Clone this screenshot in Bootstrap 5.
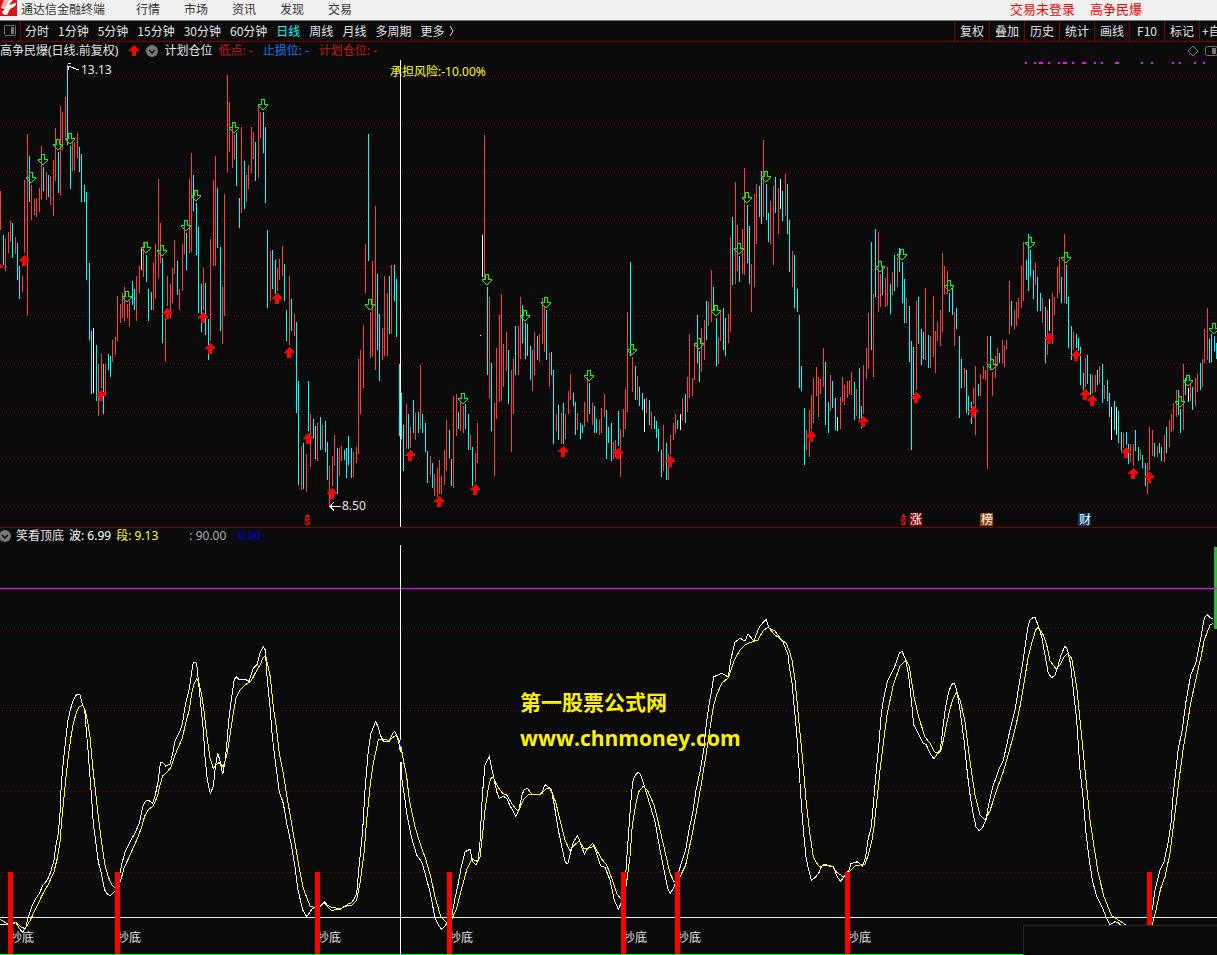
<!DOCTYPE html>
<html lang="zh-CN">
<head>
<meta charset="utf-8">
<meta name="viewport" content="width=device-width, initial-scale=1">
<title>通达信金融终端</title>
<link href="https://cdn.jsdelivr.net/npm/bootstrap@5.3.0/dist/css/bootstrap.min.css" rel="stylesheet">
<style>
  body { background: #0a0a0a; color: #e6e6e6; font-family: "Noto Sans CJK SC", "Noto Sans", sans-serif; font-size: 12px; line-height: 18px; }
  button { background: none; border: 0; padding: 0; color: inherit; white-space: nowrap; }
  .titlebar { height: 21px; background: #f0f0f0; color: #333; border-bottom: 1px solid #70757a; line-height: 17px; }
  .menus { gap: 24px; margin-left: 31px; }
  .account { color: #f00; font-size: 13px; gap: 15px; margin-right: 75px; }
  .toolbar { height: 21px; border-bottom: 1px solid #800000; }
  .toggle-cell { width: 21px; border-right: 1px solid #800000; }
  .periods { gap: 9px; padding-left: 4px; }
  .periods .active { color: #0ff; }
  .tools button { width: 35px; border-left: 1px solid #800000; }
  .tools .tool-last { width: 18px; overflow: hidden; padding-left: 2px; }
  .info-main, .info-sub, .chart .num { font-family: "Noto Sans", "Noto Sans CJK SC", sans-serif; }
  .info-main { height: 18px; gap: 6px; }
  .info-sub { height: 18px; border-top: 1px solid #800000; gap: 5px; line-height: 15px; padding-bottom: 2px; }
  .c-red { color: #d01010; } .c-blue { color: #0080ff; } .c-yellow { color: #ff0; }
  .c-gray { color: #b0b0b0; margin-left: 26px; } .c-navy { color: #0000e0; }
  .chart { shape-rendering: crispEdges; fill: none; }
  .chart text { fill: #e6e6e6; font-size: 12px; }
  .chart .risk { fill: #ff0; }
  .chart .tag { fill: #fff; }
  .chart .warn { fill: #f00; font: bold 10px "Liberation Mono", monospace; }
  .chart .mark-cn, .chart .mark-url { fill: #fff200; font-size: 21px; font-weight: 700; }
  .chart .mark-url { font-family: "Open Sans", "Noto Sans", sans-serif; }
  .gridline { stroke: #900000; stroke-dasharray: 1 3; }
</style>
</head>
<body class="d-flex flex-column min-vh-100 overflow-x-hidden">

<header class="titlebar d-flex flex-nowrap align-items-start overflow-hidden">
  <svg class="flex-shrink-0" width="17" height="16" viewBox="0 0 17 16" aria-hidden="true">
    <path fill="#d81418" d="M0 0h17v16H0z"/>
    <path fill="#fff" d="M4 0h9L9 5l7-2c0 3-2 4-6 6l-3 6c-3 0-5-1-5-3l3-3-4-1z"/>
    <path fill="#f8b0a8" d="M4 0 1 8l5-1 3-7z"/>
  </svg>
  <span class="text-nowrap ms-1">通达信金融终端</span>
  <nav class="menus d-flex" aria-label="主菜单">
    <button type="button">行情</button><button type="button">市场</button><button type="button">资讯</button><button type="button">发现</button><button type="button">交易</button>
  </nav>
  <div class="account d-flex ms-auto text-nowrap"><span>交易未登录</span><span>高争民爆</span></div>
</header>

<div class="toolbar d-flex flex-nowrap overflow-hidden">
  <button type="button" class="toggle-cell d-flex align-items-center flex-shrink-0" aria-label="侧栏">
    <svg class="mx-auto" width="14" height="12" viewBox="0 0 14 12" fill="none"><rect x="1.5" y=".5" width="11" height="10" rx="1" stroke="#777"/><path fill="#777" d="M8 2h3v7H8z"/></svg>
  </button>
  <nav class="periods d-flex align-items-center" aria-label="周期">
    <button type="button">分时</button><button type="button">1分钟</button><button type="button">5分钟</button><button type="button">15分钟</button><button type="button">30分钟</button><button type="button">60分钟</button><button type="button" class="active" aria-current="true">日线</button><button type="button">周线</button><button type="button">月线</button><button type="button">多周期</button>
    <button type="button" class="d-flex align-items-center">更多<svg class="ms-1" width="8" height="12" viewBox="0 0 8 12" fill="none" stroke="#ddd"><path d="M2 1l3 5-3 5"/></svg></button>
  </nav>
  <div class="tools d-flex ms-auto flex-shrink-0">
    <button type="button">复权</button><button type="button">叠加</button><button type="button">历史</button><button type="button">统计</button><button type="button">画线</button><button type="button">F10</button><button type="button">标记</button><button type="button" class="tool-last text-start">+自</button>
  </div>
</div>

<main>
  <section aria-label="K线图">
    <div class="info-main d-flex flex-nowrap align-items-center text-nowrap overflow-hidden">
      <span>高争民爆(日线.前复权)</span>
      <svg class="ms-1 flex-shrink-0" width="12" height="12" viewBox="0 0 12 12"><path fill="#f00" d="M6 0l6 6H8v5H4V6H0z"/></svg>
      <svg class="flex-shrink-0" width="12" height="12" viewBox="2 0 12 12"><circle cx="8" cy="6" r="6" fill="#777"/><path d="M5 5l3 3 3-3" fill="none" stroke="#0a0a0a" stroke-width="1.5"/></svg>
      <span>计划仓位</span>
      <span class="c-red">低点: -</span>
      <span class="c-blue ms-1">止损位: -</span>
      <span class="c-red ms-1">计划仓位: -</span>
      <svg class="ms-auto flex-shrink-0" width="30" height="12" viewBox="0 0 30 12" fill="none" stroke="#777"><path d="M6 1l5 5-5 5-5-5z"/><rect x="18.5" y="1.5" width="12" height="9" rx="2"/><path fill="#777" stroke="none" d="M25 3h4v6h-4z"/></svg>
    </div>
    <svg class="chart d-block w-100" viewBox="0 60 1217 467" id="kline" role="img" aria-label="日线走势">
      <g id="kgrid"></g>
      <path id="dots" stroke="#f0f" stroke-width="2"/>
      <g transform="translate(.5 0)">
        <path id="up" stroke="#ff3c3c"/><path id="down" stroke="#0ff"/><path id="flat" stroke="#fff"/>
      </g>
      <path fill="#fff" d="M480 335h1v1h-1z"/>
      <g id="signals"></g>
      <path stroke="#fff" d="M68 70v-4l11 4M68 63.5h3M330 506.5h11M334 502l-4 4.5 4 4"/>
      <text class="num" x="81" y="74">13.13</text>
      <text class="num" x="342" y="510">8.50</text>
      <text class="risk num" x="390" y="76">承担风险:-10.00%</text>
      <path fill="#800000" d="M909 513h12l1 1v12h-13z"/><path fill="#8a4500" d="M980 513h12l1 1v12h-13z"/><path fill="#003468" d="M1078 513h12l1 1v12h-13z"/>
      <text class="tag" x="910" y="524">涨</text><text class="tag" x="981" y="524">榜</text><text class="tag" x="1079" y="524">财</text>
      <text class="warn" x="304" y="525">S</text><text class="warn" x="900" y="525">S</text>
      <path fill="#f00" d="M304 517l3-3 3 3zM900 517l3-3 3 3z"/>
      <path stroke="#fff" d="M400.5 60v467"/>
    </svg>
  </section>

  <section aria-label="笑看顶底">
    <div class="info-sub d-flex flex-nowrap align-items-center text-nowrap overflow-hidden">
      <svg class="flex-shrink-0" width="11" height="12" viewBox="1 0 11 12"><circle cx="6" cy="6" r="6" fill="#777"/><path d="M3 5l3 3 3-3" fill="none" stroke="#0a0a0a" stroke-width="1.5"/></svg>
      <span>笑看顶底</span><span class="text-white">波: 6.99</span><span class="c-yellow">段: 9.13</span>
      <span class="c-gray">: 90.00</span><span class="c-navy">: 0.00</span>
    </div>
    <svg class="chart d-block w-100" viewBox="0 545 1217 410" id="wave" role="img" aria-label="波段指标">
      <g id="wgrid"></g>
      <path stroke="#f0f" d="M0 588.5h1217"/>
      <path stroke="#f0f0e8" d="M0 917.5h1217"/>
      <path id="white" stroke="#fff"/>
      <path id="yellow" stroke="#ff0"/>
      <g id="bottoms"></g>
      <path fill="#32b43c" d="M1214 547h3v82h-3z"/>
      <path stroke="#f0f" d="M1214 588.5h3"/>
      <path stroke="#0f0" d="M0 954.5h1024"/>
      <path fill="#0a0a0a" stroke="#2a2a2a" d="M1023 955v-29.5h195v30"/>
      <path stroke="#fff" d="M400.5 545v195M400.5 762v193"/>
      <path stroke="#00f" d="M400.5 741v5"/><path stroke="#fff" d="M400.5 746v6"/>
      <text class="mark-cn" x="520" y="710">第一股票公式网</text>
      <text class="mark-url" x="520" y="746">www.chnmoney.com</text>
    </svg>
  </section>
</main>

<script src="https://cdn.jsdelivr.net/npm/bootstrap@5.3.0/dist/js/bootstrap.bundle.min.js"></script>
<script>
// Daily bars: direction, x, high, low
const bars = `R0 191 230,C3 235 265,R5 239 271,R8 232 253,R10 221 242,C12 223 258,R15 237 254,C17 243 280,C19 266 299,R22 276 292,R24 180 253,R27 134 315,C29 156 202,R31 185 220,R34 199 215,R36 198 217,R39 188 212,R41 146 199,C43 167 191,R46 172 200,C48 175 197,R50 176 205,R53 160 216,R55 128 181,C58 152 193,R60 106 196,R62 112 150,R65 97 137,C67 65 145,C70 146 189,R72 142 171,R74 142 170,R77 133 158,C79 147 172,C81 154 202,C84 185 202,C86 192 280,C89 263 340,C91 331 394,W93 328 393,C96 345 401,R98 364 416,R101 354 388,C103 364 414,R105 364 394,C108 354 370,C110 356 377,R112 340 362,R115 337 355,R117 296 341,R120 304 323,R122 293 318,R124 287 321,R127 304 318,R129 301 326,C132 281 305,C134 289 310,R136 276 321,R139 266 293,W141 249 270,R143 242 277,C146 255 282,C148 289 321,C151 292 310,R153 263 310,R155 244 299,R158 179 278,R160 223 263,C162 258 343,R165 313 362,R167 276 306,R170 284 318,R172 268 303,R174 240 274,C177 261 295,R179 289 310,R182 244 291,R184 220 254,C186 233 270,R189 179 253,R191 153 252,C193 175 211,C196 203 255,C198 227 313,C201 284 332,R203 268 310,C205 283 335,C208 319 360,R210 239 341,R213 180 266,R215 156 266,C217 188 248,C220 247 331,R222 287 344,R224 194 316,R227 75 172,R229 102 152,R232 126 168,R234 135 159,C236 133 186,C239 198 228,R241 127 213,C244 161 209,R246 175 202,R248 165 189,R251 127 173,R253 132 159,C255 142 181,R258 106 178,R260 112 138,C263 112 153,C265 127 203,C267 230 308,R270 251 301,C272 250 289,C275 260 294,R277 268 291,R279 259 280,R282 246 276,C284 264 301,C286 310 341,R289 276 345,C291 299 331,R294 314 336,C296 322 413,C298 381 485,R301 446 490,C303 443 489,R306 454 492,C308 381 431,R310 414 467,C313 419 438,C315 426 459,R317 423 461,C320 417 450,R322 425 449,C325 421 452,C327 442 480,R329 466 506,R332 456 486,R334 435 465,C337 448 494,R339 448 476,R341 446 461,C344 450 460,C346 448 478,C348 436 465,C351 448 478,R353 452 477,R356 447 463,R358 359 454,R360 350 414,R363 325 388,R365 244 293,C368 134 261,R370 312 358,R372 261 356,R375 206 370,C377 274 350,C379 314 381,R382 328 360,R384 276 356,R387 293 356,C389 276 334,R391 265 334,C394 265 301,C396 279 337,C399 364 436,C401 393 439,C403 425 471,R406 404 449,C408 414 449,R410 427 448,C413 400 433,R415 413 440,C418 412 433,R420 365 429,C422 414 433,C425 423 452,C427 451 483,R430 456 475,C432 463 488,R434 474 496,R437 468 497,R439 460 494,R441 476 494,R444 450 485,R446 420 470,C449 430 458,C451 459 486,R453 396 488,R456 394 436,C458 412 429,R460 401 431,R463 406 433,C465 404 429,C468 414 450,R470 435 450,C472 447 486,R475 453 482,R477 423 463,W482 235 277,R484 135 279,C487 287 375,R489 297 398,C491 363 431,R494 403 476,R496 348 419,R499 315 402,R501 294 401,R503 344 387,R506 332 371,C508 350 404,R511 370 452,R513 359 414,C515 326 375,R518 326 375,R520 297 359,C522 305 343,C525 323 359,C527 324 356,C530 346 380,R532 350 391,R534 332 375,C537 336 360,R539 334 362,R542 298 344,R544 306 352,C546 310 360,R549 353 387,C551 352 375,C553 370 444,R556 414 431,C558 405 440,R561 413 444,C563 403 444,R565 414 439,R568 391 414,R570 374 400,C573 393 406,C575 402 435,R577 413 430,C580 423 439,C582 425 433,R584 402 427,R587 377 422,C589 383 414,R592 403 425,C594 406 433,C596 419 433,R599 420 435,R601 408 433,R604 394 417,C606 410 459,C608 427 443,C611 423 461,R613 442 459,R615 440 457,C618 411 446,R620 429 477,R623 409 437,R625 389 429,R627 312 412,C630 262 356,R632 357 392,C635 366 400,R637 376 400,C639 387 406,C642 393 410,W644 399 432,R646 398 413,C649 400 425,R651 412 429,C654 417 429,C656 421 438,C658 429 451,C661 450 477,R663 425 471,C666 443 480,R668 454 480,R670 435 454,R673 423 440,R675 414 433,C677 420 429,W680 414 430,R682 399 420,C685 394 423,R687 377 412,R689 334 398,R692 378 396,R694 345 380,C697 315 363,C699 351 382,R701 328 372,R704 320 360,C706 301 340,R708 302 326,R711 270 322,C713 287 310,C716 318 366,R718 338 364,R720 310 341,C723 308 350,C725 318 356,R728 314 343,R730 237 332,C732 217 285,R735 182 284,R737 225 271,C739 256 282,R742 229 274,R744 168 275,C747 205 263,C749 226 284,R751 264 312,R754 194 287,R756 184 244,C759 186 217,C761 171 224,R763 140 217,C766 184 220,C768 213 242,R770 201 244,R773 186 265,C775 177 213,R778 188 234,W780 179 209,C782 191 221,R785 174 216,C787 184 234,C789 220 272,R792 251 287,C794 255 308,C797 289 312,C799 315 388,C801 366 391,C804 408 465,R806 430 450,R809 410 457,R811 395 429,R813 378 423,R816 367 396,R818 377 417,R820 379 394,R823 348 387,C825 362 425,C828 402 433,R830 375 411,C832 381 408,C835 398 430,W837 417 431,R840 397 429,R842 377 402,R844 385 405,R847 381 398,R849 381 394,R851 372 395,C854 382 420,R856 389 416,C859 368 419,C861 406 428,R863 365 414,R866 348 379,R868 313 369,C871 242 350,R873 294 377,C875 229 297,R878 232 312,R880 274 307,C882 267 295,R885 278 307,R887 267 306,C890 284 314,R892 272 295,C894 255 291,R897 257 287,C899 248 272,C902 262 303,C904 279 323,R906 298 323,C909 306 362,C911 341 450,C913 347 399,R916 301 390,C918 297 344,C921 329 365,C923 332 359,R925 288 360,C928 335 368,R930 336 368,R933 296 357,R935 331 373,R937 322 341,R940 310 346,R942 253 332,R944 266 294,R947 271 294,C949 293 312,C952 288 315,R954 312 346,C956 308 329,C959 336 418,C961 359 388,R964 368 387,C966 370 413,C968 396 415,C971 402 424,R973 388 404,R975 366 435,C978 384 396,R980 374 396,R983 366 379,R985 370 380,R987 336 469,C990 336 370,R992 372 396,R995 356 378,R997 348 366,C999 353 363,R1002 340 363,R1004 346 367,R1006 340 349,R1009 281 334,C1011 301 326,R1014 310 329,R1016 302 326,R1018 298 318,R1021 266 308,R1023 242 301,C1026 260 280,C1028 234 291,C1030 250 276,C1033 270 299,R1035 263 285,C1037 277 311,C1040 293 311,R1042 298 323,C1045 307 363,R1047 310 355,W1049 299 331,R1052 293 344,R1054 297 315,R1057 267 298,R1059 257 293,C1061 277 303,R1064 234 303,C1066 265 304,C1068 297 348,C1071 326 360,R1073 332 350,C1076 334 348,C1078 338 351,C1080 347 385,C1083 373 390,R1085 358 387,C1087 355 384,C1090 374 395,R1092 375 393,R1095 375 392,C1097 370 385,R1099 366 383,C1102 364 403,R1104 385 399,C1107 380 401,C1109 393 417,W1111 407 440,C1114 401 430,W1116 407 435,C1118 411 443,C1121 432 451,R1123 433 448,C1126 432 445,C1128 444 464,R1130 444 462,R1133 444 466,C1135 430 451,C1138 447 461,R1140 450 460,C1142 455 468,C1145 463 486,R1147 463 494,R1149 427 470,R1152 430 456,C1154 443 457,R1157 446 457,C1159 443 453,C1161 447 461,R1164 435 462,C1166 427 453,R1169 420 447,R1171 414 432,R1173 403 430,R1176 390 417,C1178 390 415,C1180 409 433,R1183 364 430,C1185 378 395,W1188 388 402,R1190 384 401,C1192 387 410,R1195 378 406,R1197 374 392,C1200 363 390,R1202 359 387,R1204 329 363,R1207 308 360,C1209 339 363,C1211 334 362,C1214 336 351,C1216 343 359`.split(',');
const byId = id => document.getElementById(id);
const paths = { R: '', C: '', W: '' };
for (const bar of bars) {
  const [x, high, low] = bar.slice(1).split(' ');
  paths[bar[0]] += `M${x} ${high}V${low}`;
}
byId('up').setAttribute('d', paths.R);
byId('down').setAttribute('d', paths.C);
byId('flat').setAttribute('d', paths.W);

const gridRows = rows => rows.map(y => `<path class="gridline" d="M2 ${y}.5H1217"/>`).join('');
byId('kgrid').innerHTML = gridRows([76, 124, 172, 220, 267, 315, 363, 411, 458, 506]);
byId('wgrid').innerHTML = gridRows([628, 710, 791, 872]);
byId('dots').setAttribute('d', [[1025,2],[1034,2],[1039,4],[1048,2],[1058,2],[1063,4],[1072,2],[1082,4],[1094,2],[1101,2],[1115,4],[1141,2],[1151,2],[1172,2],[1179,2],[1194,2],[1203,2]].map(([x, w]) => `M${x} 63h${w}`).join(''));

// Sell and buy signals: arrow centre and top
const sells = [[31,172],[43,154],[58,139],[70,133],[234,122],[263,99],[196,190],[186,220],[146,242],[162,245],[127,291],[370,299],[487,274],[463,393],[525,310],[546,297],[589,370],[632,344],[699,338],[716,305],[739,243],[747,192],[766,171],[880,261],[902,249],[949,280],[992,359],[1030,237],[1066,252],[1180,396],[1188,375],[1214,323]];
const buys = [[-2,262],[24,255],[101,390],[167,308],[203,312],[210,343],[277,293],[289,347],[308,433],[332,488],[410,450],[439,496],[475,484],[563,446],[618,448],[670,456],[811,431],[863,416],[916,392],[973,406],[1049,333],[1076,350],[1085,389],[1092,395],[1126,447],[1133,468],[1149,472]];
byId('signals').innerHTML =
  `<path fill="#f00" d="${buys.map(([x, y]) => `M${x} ${y}l5 5v1h-3v5h-4v-5h-3v-1z`).join('')}"/>` +
  `<path stroke="#0f0" d="${sells.map(([x, y]) => `M${x - 1.5} ${y + .5}h3v5h3v1l-4 4h-1l-4-4v-1h3z`).join('')}"/>`;

// Indicator curves, in thirds of a unit; "|" starts a new run
const curve = s => s.split('|').map(run => 'M' + run.trim().split(/\s+/).map(p => {
  const [x, y] = p.split(',');
  return `${(x / 3).toFixed(1)} ${(540 + y / 3).toFixed(1)}`;
}).join('L')).join('');
const shift = (s, dx, dy) => s.replace(/(\d+),(\d+)/g, (m, x, y) => `${+x + dx},${+y + dy}`);
byId('white').setAttribute('d', curve(
  '0,1153 24,1153 48,1148 60,1168 68,1177 78,1160 85,1130 95,1100 108,1075 118,1060 128,1037 143,1018 153,993 162,960 168,915 175,880 180,820 184,730 190,665 196,610 203,545 211,510 218,485 226,468 234,462 240,464 246,490 254,510 258,560 264,630 269,700 274,760 280,850 287,905 295,965 304,1000 314,1050 322,1062 331,1068 345,1053 360,1000 366,970 375,937 390,905 405,880 418,850 428,800 436,784 444,780 458,790 466,765 474,725 481,670 486,666 497,678 510,673 518,640 525,603 540,572 547,553 555,500 568,445 580,366 590,370 595,420 603,500 610,570 615,650 622,720 631,760 640,740 646,680 653,640 660,662 668,703 674,670 680,620 686,540 694,480 703,418 709,410 718,420 735,418 747,424 760,384 772,373 780,338 790,320 796,330 802,420 810,500 817,590 828,680 838,755 850,790 860,850 873,910 884,975 894,1050 908,1110 920,1130 938,1105 962,1096 975,1085 985,1103 995,1111 1020,1108 1045,1092 1055,1088 1070,1062 1076,990 1088,870 1095,750 1105,630 1113,580 1127,545 1134,560 1141,585 1150,603 1168,604 1178,580 1184,575 1192,590 1198,615 1201,635 | ' +
  shift('3,305 3,340 12,400 22,470 35,535 50,585 65,605 78,650 92,705 104,770 115,795 125,808 137,795 155,770 165,715 175,670 184,620 195,575 210,568 218,605 228,615 235,600 240,545 245,440 250,370 255,315 268,290 275,325 283,360 290,395 298,415 310,409 320,415 330,437 347,468 356,452 366,405 372,390 382,385 395,402 412,405 425,400 435,374 448,383 455,395 463,435 475,510 485,560 496,606 503,612 510,585 520,545 533,527 543,555 553,582 563,565 578,550 588,575 602,618 615,622 630,660 643,720 655,748 663,730 678,630 685,530 692,430 698,365 705,347 714,337 722,345 735,385 750,435 765,485 780,570 792,630 803,685 811,700 823,680 838,630 845,605 857,570 868,505 878,460 887,395 900,335 912,265 918,200 928,130 935,90 941,50 952,46 964,40 975,45 985,52 992,0 ', 1200, 360) +
  '2205,306 2214,300 2220,294 2226,298 2235,303 2244,282 2252,292 2262,303 2270,280 2280,258 2298,238 2307,264 2325,273 2349,306 2364,345 2368,380 2376,430 2390,580 ' +
  shift('0,730 6,820 12,890 18,950 25,985 34,1021 45,1013 56,1000 64,980 72,973 100,980 110,1007 121,1024 135,1008 147,990 153,970 165,968 172,965 187,978 196,955 205,895 214,860 222,770 230,680 238,600 243,530 250,480 262,425 275,398 288,370 298,338 307,335 317,360 325,400 333,470 341,555 355,580 370,610 378,613 390,640 402,656 413,640 421,630 428,570 436,505 446,455 455,433 463,430 470,450 480,510 492,600 500,680 508,750 520,825 528,860 538,872 548,862 558,840 565,800 577,745 596,690 610,660 620,615 630,570 645,510 658,430 668,370 675,320 685,255 690,240 700,232 706,233 715,258 725,290 735,345 745,400 755,413 765,405 775,375 783,345 795,318 803,330 812,375 820,450 830,540 840,690 850,780 858,880 868,960 877,1020 890,1070 905,1098 920,1135 930,1154 945,1145 955,1148 965,1158 | 1057,1110 1065,1050 1080,990 1092,965 1105,905 1113,850 1120,760 1135,625 1147,570 1157,490 1172,405 1187,370 1202,295 1213,235 1221,224 1230,232 1240,238', 2400, 0)));
byId('yellow').setAttribute('d', curve(
  '0,1138 20,1150 48,1148 62,1160 75,1166 90,1142 110,1100 128,1062 145,1033 162,995 172,955 180,905 186,830 192,770 198,710 205,650 212,595 220,550 230,515 238,500 248,496 255,510 262,540 270,590 278,680 286,750 296,840 305,910 315,975 325,1010 335,1035 345,1043 361,1025 372,985 390,945 410,900 424,865 434,828 446,807 458,800 472,770 480,735 488,708 500,697 513,682 525,645 547,595 558,545 568,510 576,455 583,430 590,415 597,430 606,470 613,520 620,585 630,655 640,685 650,672 657,668 670,680 682,640 692,570 700,520 708,475 720,450 735,435 754,422 768,395 780,375 790,352 797,348 803,375 811,410 820,500 830,570 838,640 850,700 860,765 873,840 885,910 897,980 910,1045 930,1098 945,1103 960,1100 972,1090 992,1101 1020,1106 1040,1098 1056,1096 1070,1080 1080,1030 1092,940 1100,840 1110,740 1120,670 1135,600 1145,598 1168,601 1188,585 1197,600 ' +
  shift('3,260 10,300 20,350 28,420 45,500 60,550 78,600 92,650 105,710 122,770 141,788 155,778 170,745 184,690 200,630 215,598 232,604 240,590 247,530 255,450 265,385 272,355 280,352 295,383 308,400 320,405 335,430 350,450 356,452 370,420 385,404 410,405 425,401 440,385 452,385 468,430 480,480 495,540 510,573 525,553 538,543 553,567 575,562 583,558 605,597 620,615 635,655 650,700 663,718 679,675 690,590 697,495 708,430 716,395 730,379 742,390 762,435 778,500 795,575 810,640 822,665 840,650 857,615 876,525 892,440 905,365 917,290 928,220 940,140 950,105 965,70 985,53 1003,0 ', 1200, 360) +
  '2220,330 2235,315 2250,308 2274,300 2289,273 2304,261 2325,285 2358,309 2367,330 2376,360 2385,420 ' +
  shift('0,580 8,660 18,780 28,870 40,950 50,970 60,982 72,975 100,981 110,997 130,1010 150,993 165,978 195,972 205,945 215,905 222,860 232,770 240,690 250,610 262,520 280,435 300,378 318,360 328,380 342,470 357,535 375,590 390,610 403,635 415,640 424,630 435,575 448,515 458,478 470,457 480,480 494,540 508,650 525,765 540,825 555,840 570,812 590,750 610,695 630,625 647,560 662,490 675,410 685,350 695,310 707,270 715,262 730,285 740,315 750,362 768,386 780,375 793,350 803,340 815,355 830,440 840,540 855,690 870,840 885,940 895,1000 912,1070 935,1128 960,1143 980,1157 | 1057,1155 1068,1110 1082,1045 1095,1010 1110,940 1125,820 1137,720 1150,625 1172,490 1187,420 1203,350 1213,300 1230,255 1240,250', 2400, 0)));

// Bottom-fishing markers
byId('bottoms').innerHTML = [8, 115, 315, 447, 621, 675, 845].map(x => `<text x="${x + 2}" y="942">抄底</text><path fill="#f00" d="M${x} 872h5v82h-5z"/>`).join('') +
  '<path fill="#f00" d="M1147 872h5v54h-5z"/>';
</script>
</body>
</html>
